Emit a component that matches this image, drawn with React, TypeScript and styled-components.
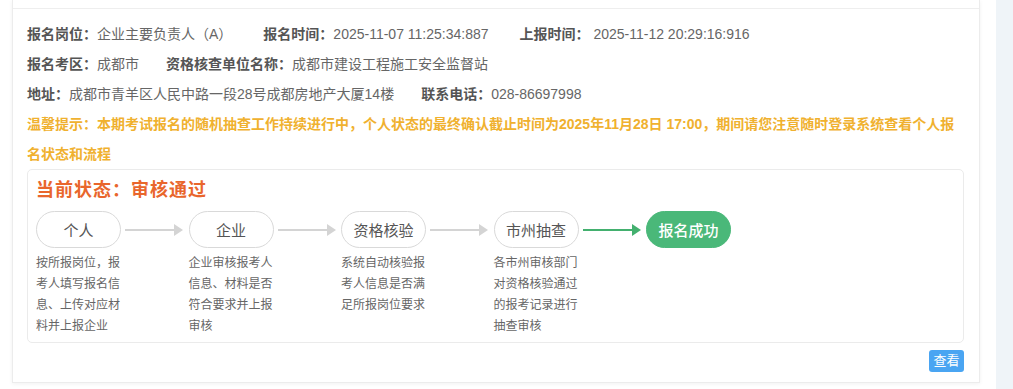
import React from "react";
import styled, { createGlobalStyle } from "styled-components";

const GlobalStyle = createGlobalStyle`
  html, body {
    margin: 0;
    padding: 0;
    background: #ffffff;
  }
  body {
    font-family: "Liberation Sans", "Noto Sans CJK SC", sans-serif;
    font-size: 14px;
    color: #666;
  }
  * { box-sizing: border-box; }
`;

const Page = styled.div`
  display: flex;
  height: 389px;
  overflow: hidden;
  background: #ffffff;
`;

const Main = styled.div`
  flex: 0 0 996px;
  padding: 0 16px 0 12px;
`;

const SideStrip = styled.div`
  flex: 1;
  background: #eff4f8;
`;

const Card = styled.div`
  background: #fff;
  border: 1px solid #ececec;
  border-top: none;
  box-shadow: 0 1px 4px rgba(0, 0, 0, 0.06);
`;

const CardHeaderRule = styled.div`
  height: 9px;
  border-bottom: 1px solid #eeeeee;
`;

const CardBody = styled.div`
  padding: 10px 15px 10px 14px;
`;

const InfoRow = styled.div`
  display: flex;
  align-items: center;
  height: 30px;
  line-height: 30px;
  white-space: nowrap;
`;

const InfoItem = styled.div<{ $gap?: number }>`
  display: flex;
  margin-right: ${(p) => p.$gap ?? 27}px;
`;

const Label = styled.span`
  font-weight: bold;
  color: #555;
`;

const Value = styled.span`
  color: #666;
`;

const Notice = styled.div`
  color: #f0b12f;
  font-weight: bold;
  line-height: 30px;
`;

const StatusBox = styled.div`
  border: 1px solid #ebebeb;
  border-radius: 5px;
  padding: 8px 8px 5px 8px;
`;

const StatusTitle = styled.div`
  color: #e9662c;
  font-size: 18px;
  letter-spacing: 1px;
  font-weight: bold;
  line-height: 24px;
`;

const Flow = styled.div`
  display: flex;
  align-items: flex-start;
  margin-top: 9px;
`;

const Step = styled.div`
  display: flex;
  flex-direction: column;
  width: 85px;
  flex: 0 0 85px;
`;

const Pill = styled.div<{ $done?: boolean }>`
  height: 37px;
  border-radius: 19px;
  display: flex;
  align-items: center;
  justify-content: center;
  font-size: 15px;
  border: 1px solid ${(p) => (p.$done ? "#4ab879" : "#d9d9d9")};
  background: ${(p) => (p.$done ? "#4ab879" : "#ffffff")};
  color: ${(p) => (p.$done ? "#ffffff" : "#555")};
  font-weight: ${(p) => (p.$done ? 500 : 400)};
`;

const Desc = styled.div`
  margin-top: 5px;
  font-size: 12px;
  line-height: 21px;
  color: #666;
`;

const ArrowWrap = styled.div`
  flex: 0 0 59.5px;
  height: 37px;
  margin: 0 4px;
  display: flex;
  align-items: center;
`;

const Actions = styled.div`
  display: flex;
  justify-content: flex-end;
  margin-top: 7px;
`;

const ViewButton = styled.button`
  height: 22px;
  width: 35px;
  padding: 0;
  border: none;
  border-radius: 3px;
  background: #4aa5f2;
  color: #fff;
  font-family: inherit;
  font-size: 13px;
  line-height: 22px;
  cursor: pointer;
`;

const Arrow = ({ color }: { color: string }) => (
  <ArrowWrap>
    <svg width="59" height="14" viewBox="0 0 59 14">
      <line x1="0" y1="7" x2="50" y2="7" stroke={color} strokeWidth="2" />
      <polygon points="49,1 58,7 49,13" fill={color} />
    </svg>
  </ArrowWrap>
);

const steps = [
  { name: "个人", desc: "按所报岗位，报考人填写报名信息、上传对应材料并上报企业" },
  { name: "企业", desc: "企业审核报考人信息、材料是否符合要求并上报审核" },
  { name: "资格核验", desc: "系统自动核验报考人信息是否满足所报岗位要求" },
  { name: "市州抽查", desc: "各市州审核部门对资格核验通过的报考记录进行抽查审核" },
];

export default function App() {
  return (
    <>
      <GlobalStyle />
      <Page>
        <Main>
          <Card>
            <CardHeaderRule />
            <CardBody>
              <InfoRow>
                <InfoItem $gap={31}>
                  <Label>报名岗位：</Label>
                  <Value>企业主要负责人（A）</Value>
                </InfoItem>
                <InfoItem $gap={31}>
                  <Label>报名时间：</Label>
                  <Value>2025-11-07 11:25:34:887</Value>
                </InfoItem>
                <InfoItem>
                  <Label>上报时间：</Label>
                  <Value>&nbsp;2025-11-12 20:29:16:916</Value>
                </InfoItem>
              </InfoRow>
              <InfoRow>
                <InfoItem>
                  <Label>报名考区：</Label>
                  <Value>成都市</Value>
                </InfoItem>
                <InfoItem>
                  <Label>资格核查单位名称：</Label>
                  <Value>成都市建设工程施工安全监督站</Value>
                </InfoItem>
              </InfoRow>
              <InfoRow>
                <InfoItem>
                  <Label>地址：</Label>
                  <Value>成都市青羊区人民中路一段28号成都房地产大厦14楼</Value>
                </InfoItem>
                <InfoItem>
                  <Label>联系电话：</Label>
                  <Value>028-86697998</Value>
                </InfoItem>
              </InfoRow>
              <Notice>
                温馨提示：本期考试报名的随机抽查工作持续进行中，个人状态的最终确认截止时间为2025年11月28日 17:00，期间请您注意随时登录系统查看个人报名状态和流程
              </Notice>
              <StatusBox>
                <StatusTitle>当前状态：审核通过</StatusTitle>
                <Flow>
                  {steps.map((s, i) => (
                    <React.Fragment key={s.name}>
                      <Step>
                        <Pill>{s.name}</Pill>
                        <Desc>{s.desc}</Desc>
                      </Step>
                      <Arrow color={i === steps.length - 1 ? "#43b06f" : "#d4d4d4"} />
                    </React.Fragment>
                  ))}
                  <Step>
                    <Pill $done>报名成功</Pill>
                  </Step>
                </Flow>
              </StatusBox>
              <Actions>
                <ViewButton>查看</ViewButton>
              </Actions>
            </CardBody>
          </Card>
        </Main>
        <SideStrip />
      </Page>
    </>
  );
}
